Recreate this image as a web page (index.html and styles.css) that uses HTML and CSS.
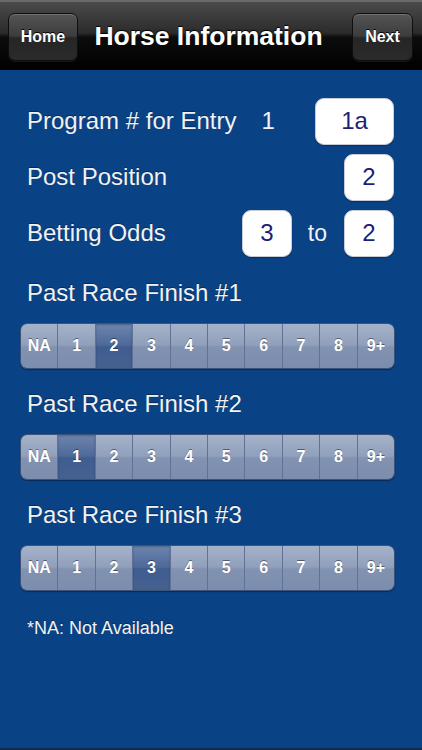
FILE: index.html
```html
<!DOCTYPE html>
<html>
<head>
<meta charset="utf-8">
<link rel="stylesheet" href="styles.css">
</head>
<body>
<div class="screen">
  <header class="navbar">
    <button class="nav-btn home">Home</button>
    <h1 class="title">Horse Information</h1>
    <button class="nav-btn next">Next</button>
  </header>
  <main class="content">
    <div class="row">
      <span class="label">Program # for Entry</span>
      <span class="entry-num">1</span>
      <span class="spacer"></span>
      <span class="box wide">1a</span>
    </div>
    <div class="row">
      <span class="label">Post Position</span>
      <span class="spacer"></span>
      <span class="box">2</span>
    </div>
    <div class="row">
      <span class="label">Betting Odds</span>
      <span class="spacer"></span>
      <span class="box">3</span>
      <span class="to">to</span>
      <span class="box">2</span>
    </div>

    <section class="finish first">
      <div class="finish-label">Past Race Finish #1</div>
      <div class="segmented">
        <span class="seg">NA</span><span class="seg">1</span><span class="seg selected">2</span><span class="seg">3</span><span class="seg">4</span><span class="seg">5</span><span class="seg">6</span><span class="seg">7</span><span class="seg">8</span><span class="seg">9+</span>
      </div>
    </section>
    <section class="finish">
      <div class="finish-label">Past Race Finish #2</div>
      <div class="segmented">
        <span class="seg">NA</span><span class="seg selected">1</span><span class="seg">2</span><span class="seg">3</span><span class="seg">4</span><span class="seg">5</span><span class="seg">6</span><span class="seg">7</span><span class="seg">8</span><span class="seg">9+</span>
      </div>
    </section>
    <section class="finish">
      <div class="finish-label">Past Race Finish #3</div>
      <div class="segmented">
        <span class="seg">NA</span><span class="seg">1</span><span class="seg">2</span><span class="seg selected">3</span><span class="seg">4</span><span class="seg">5</span><span class="seg">6</span><span class="seg">7</span><span class="seg">8</span><span class="seg">9+</span>
      </div>
    </section>

    <p class="note">*NA: Not Available</p>
  </main>
</div>
</body>
</html>
```

FILE: styles.css
```css
html, body {
  margin: 0;
  padding: 0;
  background: #0a4286;
}
.screen {
  width: 422px;
  height: 750px;
  display: flex;
  flex-direction: column;
  font-family: "Liberation Sans", Arial, sans-serif;
  overflow: hidden;
}
.navbar {
  height: 70px;
  box-sizing: border-box;
  display: flex;
  align-items: center;
  padding: 0 9px 0 8px;
  border-top: 2px solid #6a6a6a;
  background: linear-gradient(to bottom, #4a4a4a 0%, #2c2c2c 45%, #0c0c0c 52%, #000 100%);
}
.nav-btn {
  height: 48px;
  border: 1px solid #0e0e0e;
  border-radius: 7px;
  background: linear-gradient(to bottom, #555 0%, #3c3c3c 48%, #262626 52%, #2a2a2a 100%);
  box-shadow: inset 0 1px 0 rgba(255,255,255,0.18), 0 1px 0 rgba(255,255,255,0.08);
  color: #fff;
  font-family: "Liberation Sans", Arial, sans-serif;
  font-weight: bold;
  font-size: 16px;
  text-shadow: 0 -1px 0 #000;
  padding: 0;
  margin-top: 2px;
}
.home { width: 70px; }
.next { width: 61px; }
.title {
  flex: 1;
  margin: 0;
  padding-right: 13px;
  text-align: center;
  color: #fff;
  font-size: 26.5px;
  font-weight: bold;
  text-shadow: 0 -1px 1px #000;
}
.content {
  flex: 1;
  padding: 27px 28px 0 27px;
  border-bottom: 2px solid #132a4a;
  color: #f2f2f2;
}
.row {
  height: 48px;
  display: flex;
  align-items: center;
  margin-bottom: 8px;
}
.label {
  font-size: 24px;
  text-shadow: 0 -1px 0 rgba(0,0,0,0.35);
}
.entry-num {
  font-size: 24px;
  margin-left: 25px;
}
.spacer { flex: 1; }
.box {
  width: 50px;
  height: 47px;
  box-sizing: border-box;
  border-radius: 9px;
  background: #fff;
  border: 1px solid #c9ccd6;
  box-shadow: 0 1px 1px rgba(0,0,0,0.3);
  color: #1c1f78;
  font-size: 24px;
  display: flex;
  align-items: center;
  justify-content: center;
}
.box.wide { width: 79px; }
.to {
  font-size: 23px;
  margin: 0 17px 0 16px;
}
.finish {
  margin-top: 19px;
}
.finish.first {
  margin-top: 20px;
}
.finish-label {
  height: 32px;
  line-height: 32px;
  font-size: 24px;
  text-shadow: 0 -1px 0 rgba(0,0,0,0.35);
  margin-bottom: 14px;
}
.segmented {
  margin: 0 -1px 0 -7px;
  height: 46px;
  box-sizing: border-box;
  display: flex;
  border: 1px solid #3e5378;
  border-radius: 7px;
  overflow: hidden;
  box-shadow: 0 1px 1px rgba(0,0,0,0.35);
}
.seg {
  flex: 1;
  display: flex;
  align-items: center;
  justify-content: center;
  color: #fff;
  font-weight: bold;
  font-size: 16px;
  text-shadow: 0 -1px 0 rgba(0,0,0,0.45);
  background: linear-gradient(to bottom, #a5b2c9 0%, #909fbb 48%, #8292b1 52%, #7c8dad 100%);
  border-left: 1px solid #5f7297;
}
.seg:first-child { border-left: none; }
.seg.selected {
  background: linear-gradient(to bottom, #6d84ad 0%, #4e6999 48%, #405d91 52%, #45618f 100%);
  box-shadow: inset 0 1px 2px rgba(0,0,0,0.25);
}
.note {
  margin: 26px 0 0 0;
  font-size: 18px;
  line-height: 22px;
  text-shadow: 0 -1px 0 rgba(0,0,0,0.35);
}
```
